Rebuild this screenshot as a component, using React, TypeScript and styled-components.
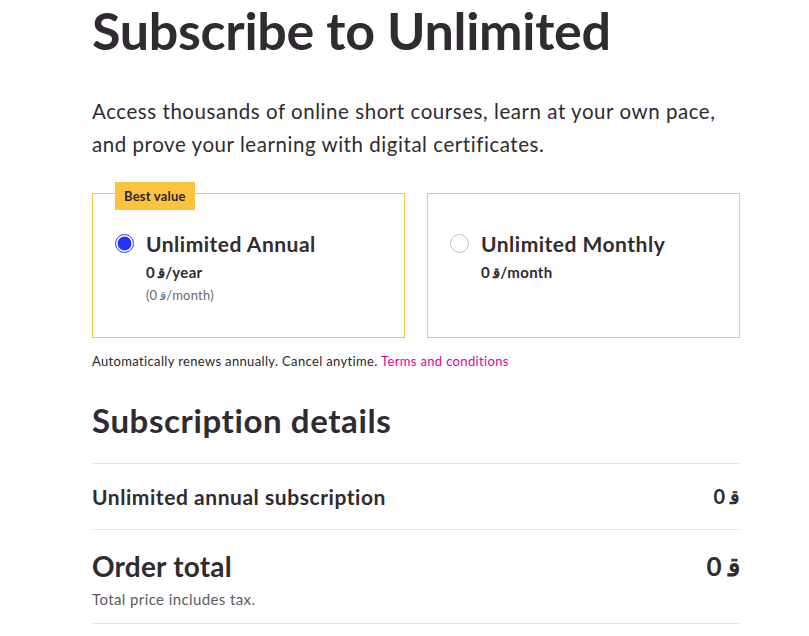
import React from "react";
import styled, { createGlobalStyle } from "styled-components";

const Global = createGlobalStyle`
  html, body { margin: 0; padding: 0; background: #fff; }
  body { font-family: Lato, "Noto Sans", sans-serif; color: #302b30; }
  * { box-sizing: border-box; }
`;

const Page = styled.main`
  width: 648px;
  margin-left: 92px;
  display: flex;
  flex-direction: column;
`;

const Title = styled.h1`
  margin: 0;
  padding-top: 2px;
  font-size: 52px;
  line-height: 56px;
  font-weight: 700;
  letter-spacing: -0.3px;
`;

const Lead = styled.p`
  margin: 37px 0 0;
  font-size: 20.5px;
  line-height: 33px;
  font-weight: 400;
  letter-spacing: 0.55px;
`;

const Plans = styled.div`
  margin-top: 32px;
  display: grid;
  grid-template-columns: 313px 313px;
  column-gap: 22px;
`;

const Card = styled.label<{ $selected?: boolean }>`
  position: relative;
  height: 145px;
  border: 1px solid ${(p) => (p.$selected ? "#f9c142" : "#c9c9c9")};
  padding: 39px 22px 0 22px;
  display: flex;
  gap: 12px;
  align-items: flex-start;
`;

const Badge = styled.span`
  position: absolute;
  top: -12px;
  left: 22px;
  background: #fcc33f;
  padding: 0 9px;
  height: 28px;
  line-height: 28px;
  font-size: 13px;
  font-weight: 700;
  color: #2b272d;
  letter-spacing: 0.2px;
`;

const Radio = styled.span<{ $checked?: boolean }>`
  flex: none;
  margin-top: 1px;
  width: 19px;
  height: 19px;
  border-radius: 50%;
  border: 1px solid ${(p) => (p.$checked ? "#2d3cf5" : "#c4c4c4")};
  background: ${(p) => (p.$checked ? "radial-gradient(circle, #2233ff 0 6.5px, #fff 7.3px)" : "#fff")};
`;

const PlanText = styled.div`
  display: flex;
  flex-direction: column;
`;

const PlanName = styled.span`
  font-size: 21px;
  line-height: 22px;
  font-weight: 700;
  letter-spacing: 0.5px;
`;

const PlanPrice = styled.span`
  margin-top: 7px;
  font-size: 15px;
  line-height: 20px;
  font-weight: 700;
  letter-spacing: 0.3px;
`;

const PlanSub = styled.span`
  margin-top: 5px;
  font-size: 13px;
  line-height: 16px;
  color: #6b6a6e;
  letter-spacing: 0.2px;
`;

const Note = styled.p`
  margin: 14px 0 0;
  font-size: 13px;
  line-height: 18px;
  color: #2b272d;
  letter-spacing: 0.35px;
`;

const Link = styled.a`
  color: #e2009c;
  text-decoration: none;
`;

const H2 = styled.h2`
  margin: 30px 0 0;
  font-size: 33px;
  line-height: 40px;
  font-weight: 700;
  letter-spacing: 0.6px;
`;

const Row = styled.div<{ $pad: string }>`
  margin-top: ${(p) => (p.$pad === "first" ? "23px" : "0")};
  border-top: 1px solid #e4e4e4;
  padding: ${(p) => (p.$pad === "first" ? "20px 0 20px" : "20px 0 15px")};
  display: grid;
  grid-template-columns: 1fr auto;
  align-items: center;
`;

const RowLabel = styled.span<{ $big?: boolean }>`
  font-size: ${(p) => (p.$big ? "28px" : "21px")};
  line-height: ${(p) => (p.$big ? "32px" : "24px")};
  font-weight: 700;
  letter-spacing: ${(p) => (p.$big ? "0.2px" : "0.55px")};
`;

const RowValue = styled.span<{ $big?: boolean }>`
  font-size: ${(p) => (p.$big ? "26px" : "20px")};
  font-weight: 700;
`;

const Small = styled.span`
  grid-column: 1 / -1;
  margin-top: 8px;
  font-size: 15px;
  line-height: 18px;
  color: #5d5a5f;
  letter-spacing: 0.4px;
`;

const Bottom = styled.div`
  border-top: 1px solid #e4e4e4;
  height: 14px;
`;

const CUR = "ﻗ";

export default function App() {
  return (
    <>
      <Global />
      <Page>
        <Title>Subscribe to Unlimited</Title>
        <Lead>
          Access thousands of online short courses, learn at your own pace, and prove your learning with digital certificates.
        </Lead>
        <Plans>
          <Card $selected>
            <Badge>Best value</Badge>
            <Radio $checked />
            <PlanText>
              <PlanName>Unlimited Annual</PlanName>
              <PlanPrice>0 {CUR}/year</PlanPrice>
              <PlanSub>(0 {CUR}/month)</PlanSub>
            </PlanText>
          </Card>
          <Card>
            <Radio />
            <PlanText>
              <PlanName>Unlimited Monthly</PlanName>
              <PlanPrice>0 {CUR}/month</PlanPrice>
            </PlanText>
          </Card>
        </Plans>
        <Note>
          Automatically renews annually. Cancel anytime. <Link href="#">Terms and conditions</Link>
        </Note>
        <H2>Subscription details</H2>
        <Row $pad="first">
          <RowLabel>Unlimited annual subscription</RowLabel>
          <RowValue>0 {CUR}</RowValue>
        </Row>
        <Row $pad="second">
          <RowLabel $big>Order total</RowLabel>
          <RowValue $big>0 {CUR}</RowValue>
          <Small>Total price includes tax.</Small>
        </Row>
        <Bottom />
      </Page>
    </>
  );
}
